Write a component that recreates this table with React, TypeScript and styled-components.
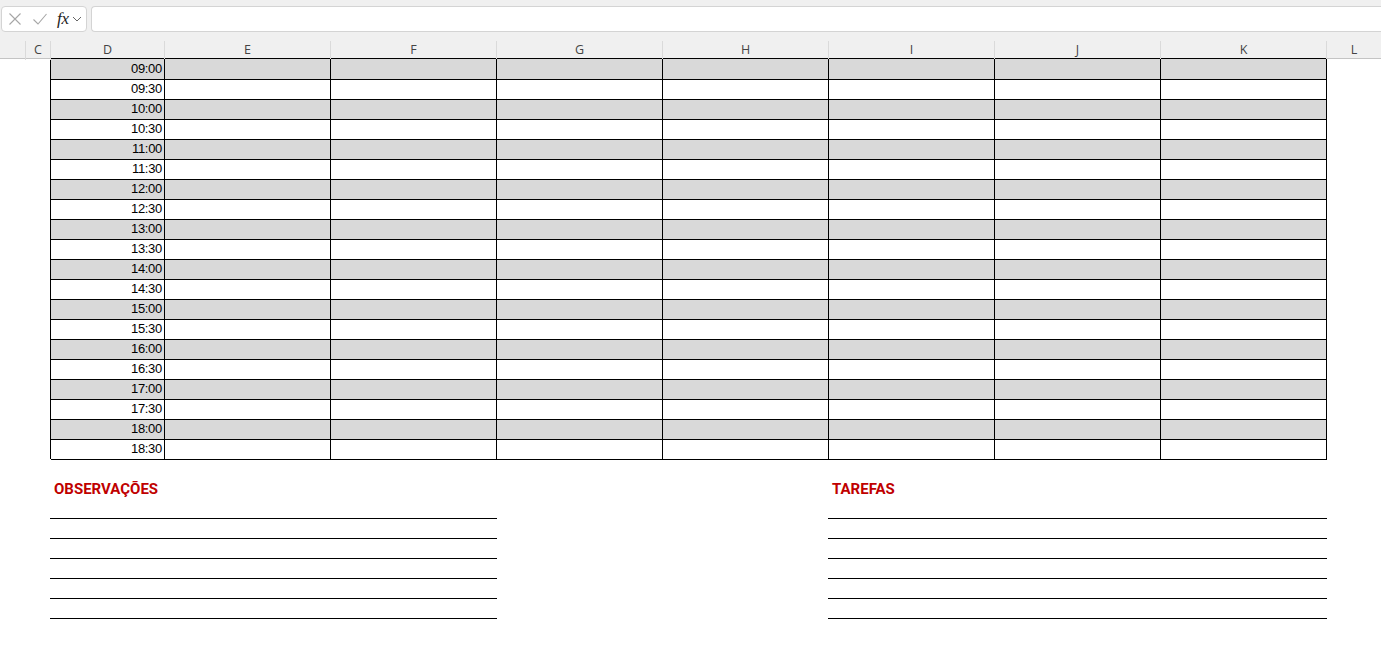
import React, { FC } from "react"
import { styled, createGlobalStyle } from "styled-components"

const COLS = ["", "C", "D", "E", "F", "G", "H", "I", "J", "K", "L"]
const TIMES = [
  "09:00", "09:30", "10:00", "10:30", "11:00", "11:30", "12:00", "12:30",
  "13:00", "13:30", "14:00", "14:30", "15:00", "15:30", "16:00", "16:30",
  "17:00", "17:30", "18:00", "18:30",
]
const LINE_COUNT = 6

const GlobalStyle = createGlobalStyle`
  html, body {
    margin: 0;
    padding: 0;
    background: #ffffff;
    overflow: hidden;
  }
  * {
    box-sizing: border-box;
  }
`

const App: FC = (): JSX.Element => {
  return (
    <Page>
      <GlobalStyle />

      <FormulaBar>
        <ActionBox>
          <svg width="14" height="14" viewBox="0 0 14 14">
            <path d="M1.5 1.5 L12.5 12.5 M12.5 1.5 L1.5 12.5" stroke="#a6a6a6" strokeWidth="1.1" fill="none" />
          </svg>
          <svg width="16" height="14" viewBox="0 0 16 14">
            <path d="M1.5 7.5 L6 12 L14.5 2" stroke="#a6a6a6" strokeWidth="1.1" fill="none" />
          </svg>
          <Fx>fx</Fx>
          <svg width="10" height="8" viewBox="0 0 10 8">
            <path d="M1 2 L5 6 L9 2" stroke="#666" strokeWidth="1" fill="none" />
          </svg>
        </ActionBox>
        <FormulaInput />
      </FormulaBar>

      <ColumnHeader>
        {COLS.map((c, i) => (
          <HeaderCell key={i}>{c}</HeaderCell>
        ))}
      </ColumnHeader>

      <Schedule>
        {TIMES.map((t, i) => (
          <Row key={t} $shaded={i % 2 === 0}>
            <TimeCell>{t}</TimeCell>
            {Array.from({ length: 7 }).map((_, j) => (
              <Cell key={j} />
            ))}
          </Row>
        ))}
      </Schedule>

      <Notes>
        <NoteBlock>
          <NoteTitle>OBSERVAÇÕES</NoteTitle>
          {Array.from({ length: LINE_COUNT }).map((_, i) => (
            <NoteLine key={i} />
          ))}
        </NoteBlock>
        <div />
        <NoteBlock>
          <NoteTitle>TAREFAS</NoteTitle>
          {Array.from({ length: LINE_COUNT }).map((_, i) => (
            <NoteLine key={i} />
          ))}
        </NoteBlock>
      </Notes>
    </Page>
  )
}

const Page = styled.div`
  width: 1381px;
  height: 661px;
  background: #ffffff;
  font-family: "Liberation Sans", Arial, sans-serif;
`

const FormulaBar = styled.div`
  height: 39px;
  background: #f0f0f0;
  padding-top: 6px;
  display: flex;
  align-items: flex-start;
`

const ActionBox = styled.div`
  margin-left: 1px;
  width: 86px;
  height: 26px;
  background: #ffffff;
  border: 1px solid #d4d4d4;
  border-radius: 4px;
  display: flex;
  align-items: center;
  padding-left: 6px;
  gap: 8px;

  > svg:nth-child(2) {
    margin-left: 2px;
  }
`

const Fx = styled.span`
  font-family: "Liberation Serif", "Times New Roman", serif;
  font-style: italic;
  font-size: 17px;
  color: #222222;
  margin-left: 1px;
  margin-right: -5px;
  letter-spacing: -0.3px;
`

const FormulaInput = styled.div`
  margin-left: 4px;
  flex: 1;
  height: 26px;
  background: #ffffff;
  border: 1px solid #d4d4d4;
  border-right: none;
  border-radius: 4px 0 0 4px;
`

const ColumnHeader = styled.div`
  height: 20px;
  background: #f0f0f0;
  border-bottom: 1px solid #c4c4c4;
  display: grid;
  grid-template-columns: 26px 25px 114px repeat(7, 166px) 1fr;
`

const HeaderCell = styled.div`
  border-right: 1px solid #dadada;
  margin-top: 2px;
  display: flex;
  align-items: center;
  justify-content: center;
  font-family: "Open Sans", "Noto Sans", sans-serif;
  font-size: 12.5px;
  color: #444444;
  padding-bottom: 2px;

  &:last-child {
    border-right: none;
  }
`

const Schedule = styled.div`
  margin: -1px 0 0 50px;
  width: 1277px;
  border-left: 1px solid #000000;
  border-top: 1px solid #000000;
`

const Row = styled.div<{ $shaded: boolean }>`
  display: grid;
  grid-template-columns: 114px repeat(7, 166px);
  height: 20px;
  background: ${({ $shaded }) => ($shaded ? "#d9d9d9" : "#ffffff")};
`

const Cell = styled.div`
  border-right: 1px solid #000000;
  border-bottom: 1px solid #000000;
`

const TimeCell = styled(Cell)`
  text-align: right;
  padding-right: 2px;
  font-size: 13px;
  letter-spacing: -0.3px;
  line-height: 20px;
  color: #000000;
`

const Notes = styled.div`
  margin: 20px 0 0 50px;
  display: grid;
  grid-template-columns: 447px 331px 499px;
`

const NoteBlock = styled.div`
  display: flex;
  flex-direction: column;
`

const NoteTitle = styled.div`
  height: 20px;
  line-height: 20px;
  padding-left: 4px;
  font-family: Roboto, "Liberation Sans", sans-serif;
  font-weight: bold;
  font-size: 15px;
  color: #c00000;
`

const NoteLine = styled.div`
  height: 20px;
  border-bottom: 1px solid #000000;
`

export default App
